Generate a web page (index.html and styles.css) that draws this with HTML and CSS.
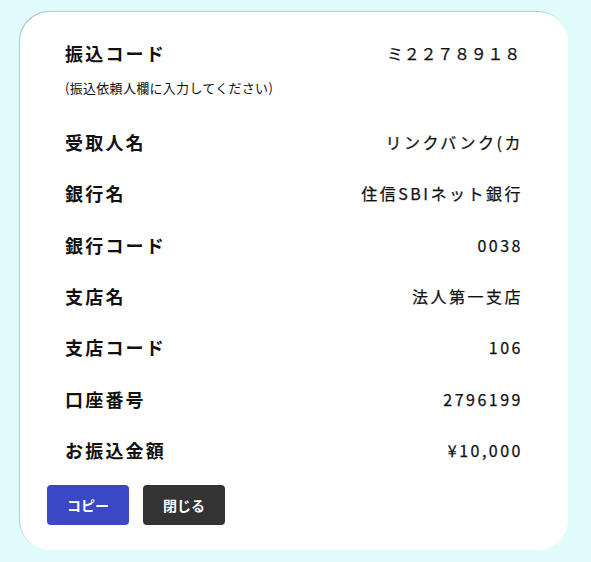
FILE: index.html
```html
<!DOCTYPE html>
<html lang="ja">
<head>
<meta charset="utf-8">
<title>振込情報</title>
<link rel="stylesheet" href="styles.css">
</head>
<body>
<div class="card">
  <div class="row">
    <span class="label">振込コード</span>
    <span class="value code">ミ２２７８９１８</span>
  </div>
  <p class="note">(振込依頼人欄に入力してください)</p>
  <div class="row">
    <span class="label">受取人名</span>
    <span class="value">リンクバンク(カ</span>
  </div>
  <div class="row">
    <span class="label">銀行名</span>
    <span class="value">住信SBIネット銀行</span>
  </div>
  <div class="row">
    <span class="label">銀行コード</span>
    <span class="value">0038</span>
  </div>
  <div class="row">
    <span class="label">支店名</span>
    <span class="value">法人第一支店</span>
  </div>
  <div class="row">
    <span class="label">支店コード</span>
    <span class="value">106</span>
  </div>
  <div class="row">
    <span class="label">口座番号</span>
    <span class="value">2796199</span>
  </div>
  <div class="row">
    <span class="label">お振込金額</span>
    <span class="value">¥10,000</span>
  </div>
  <div class="actions">
    <button class="btn btn-copy">コピー</button>
    <button class="btn btn-close">閉じる</button>
  </div>
</div>
</body>
</html>
```
FILE: styles.css
```css
html, body {
  margin: 0;
  padding: 0;
}
body {
  background: #e0fcfd;
  font-family: "Noto Sans CJK JP", "Noto Sans", sans-serif;
  color: #111;
  padding: 12px 23px 12px 20px;
  box-sizing: border-box;
  width: 591px;
  height: 562px;
}
.card {
  background: #fff;
  border-radius: 30px;
  box-shadow: -1px -1px 1px rgba(80, 110, 120, 0.35);
  height: 538px;
  box-sizing: border-box;
  padding: 15px 27px 0 27px;
}
.row {
  height: 51.33px;
  display: flex;
  align-items: center;
  justify-content: space-between;
  padding: 0 18px;
}
.label {
  font-size: 18px;
  font-weight: 700;
  letter-spacing: 2.2px;
  color: #111;
}
.value {
  font-size: 16px;
  font-weight: 400;
  letter-spacing: 2.5px;
  color: #111;
  -webkit-text-stroke: 0.25px #111;
}
.value.code {
  letter-spacing: 0.75px;
  margin-right: 2px;
}
.note {
  margin: 1px 0 19px;
  padding: 0 18px;
  font-size: 13px;
  line-height: 18px;
  letter-spacing: 0.3px;
  color: #111;
}
.actions {
  display: flex;
  gap: 14px;
  margin-top: 9px;
}
.btn {
  width: 82px;
  height: 40px;
  border: none;
  border-radius: 4px;
  color: #fff;
  font-family: "Noto Sans CJK JP", "Noto Sans", sans-serif;
  font-size: 14px;
  font-weight: 700;
  padding: 0;
}
.btn-copy {
  background: #3a48c6;
}
.btn-close {
  background: #333333;
}
```
